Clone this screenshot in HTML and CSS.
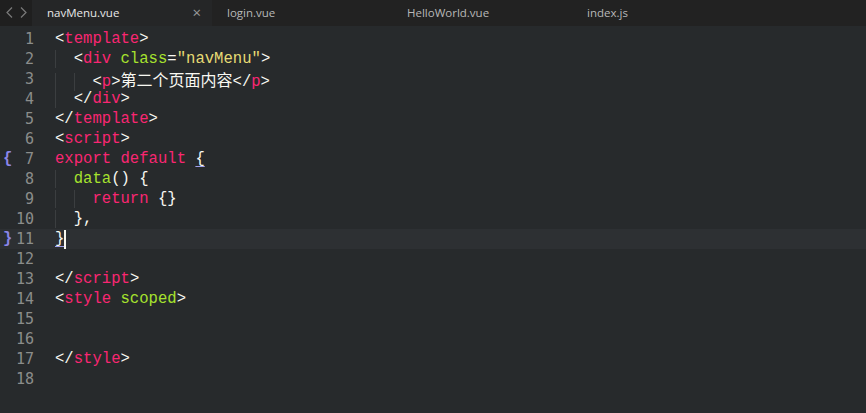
FILE: index.html
```html
<!DOCTYPE html>
<html>
<head>
<meta charset="utf-8">
<link rel="stylesheet" href="styles.css">
</head>
<body>
<div class="app">
  <div class="tabbar">
    <div class="nav">
      <svg width="7" height="11" viewBox="0 0 7 11"><path d="M6 0.5 L1 5.5 L6 10.5" fill="none" stroke="#7a7a7a" stroke-width="1.2"/></svg>
      <svg width="7" height="11" viewBox="0 0 7 11"><path d="M1 0.5 L6 5.5 L1 10.5" fill="none" stroke="#7a7a7a" stroke-width="1.2"/></svg>
    </div>
    <div class="tab active"><span class="name">navMenu.vue</span><span class="close">&times;</span></div>
    <div class="tab"><span class="name">login.vue</span></div>
    <div class="tab"><span class="name">HelloWorld.vue</span></div>
    <div class="tab"><span class="name">index.js</span></div>
  </div>
  <div class="editor">
    <div class="line"><span class="gut"><span class="num">1</span></span><span class="code"><span class="p">&lt;</span><span class="k">template</span><span class="p">&gt;</span></span></div>
    <div class="line"><span class="gut"><span class="num">2</span></span><span class="code"><span class="ig">  </span><span class="p">&lt;</span><span class="k">div</span> <span class="a">class</span><span class="p">=</span><span class="s">"navMenu"</span><span class="p">&gt;</span></span></div>
    <div class="line"><span class="gut"><span class="num">3</span></span><span class="code"><span class="ig">  </span><span class="ig">  </span><span class="p">&lt;</span><span class="k">p</span><span class="p">&gt;</span><span class="cjk">第二个页面内容</span><span class="p">&lt;/</span><span class="k">p</span><span class="p">&gt;</span></span></div>
    <div class="line"><span class="gut"><span class="num">4</span></span><span class="code"><span class="ig">  </span><span class="p">&lt;/</span><span class="k">div</span><span class="p">&gt;</span></span></div>
    <div class="line"><span class="gut"><span class="num">5</span></span><span class="code"><span class="p">&lt;/</span><span class="k">template</span><span class="p">&gt;</span></span></div>
    <div class="line"><span class="gut"><span class="num">6</span></span><span class="code"><span class="p">&lt;</span><span class="k">script</span><span class="p">&gt;</span></span></div>
    <div class="line"><span class="gut"><span class="br">{</span><span class="num">7</span></span><span class="code"><span class="k">export</span> <span class="k">default</span> <span class="p ul">{</span></span></div>
    <div class="line"><span class="gut"><span class="num">8</span></span><span class="code"><span class="ig">  </span><span class="a">data</span><span class="p">() {</span></span></div>
    <div class="line"><span class="gut"><span class="num">9</span></span><span class="code"><span class="ig">  </span><span class="ig">  </span><span class="k">return</span> <span class="p">{}</span></span></div>
    <div class="line"><span class="gut"><span class="num">10</span></span><span class="code"><span class="ig">  </span><span class="p">},</span></span></div>
    <div class="line cur"><span class="gut"><span class="br">}</span><span class="num">11</span></span><span class="code"><span class="p ul">}</span><span class="caret"></span></span></div>
    <div class="line"><span class="gut"><span class="num">12</span></span><span class="code"></span></div>
    <div class="line"><span class="gut"><span class="num">13</span></span><span class="code"><span class="p">&lt;/</span><span class="k">script</span><span class="p">&gt;</span></span></div>
    <div class="line"><span class="gut"><span class="num">14</span></span><span class="code"><span class="p">&lt;</span><span class="k">style</span> <span class="a">scoped</span><span class="p">&gt;</span></span></div>
    <div class="line"><span class="gut"><span class="num">15</span></span><span class="code"></span></div>
    <div class="line"><span class="gut"><span class="num">16</span></span><span class="code"></span></div>
    <div class="line"><span class="gut"><span class="num">17</span></span><span class="code"><span class="p">&lt;/</span><span class="k">style</span><span class="p">&gt;</span></span></div>
    <div class="line"><span class="gut"><span class="num">18</span></span><span class="code"></span></div>
  </div>
</div>
</body>
</html>
```

FILE: styles.css
```css
html, body {
  margin: 0;
  padding: 0;
  background: #272a2c;
}
.app {
  width: 866px;
  height: 413px;
  display: flex;
  flex-direction: column;
  background: #272a2c;
  overflow: hidden;
}
.tabbar {
  height: 26px;
  display: flex;
  background: #222222;
  font-family: "Open Sans", "Noto Sans", sans-serif;
  font-size: 11.5px;
  color: #b8b8b8;
  flex-shrink: 0;
}
.nav {
  width: 32px;
  display: flex;
  align-items: center;
  justify-content: center;
  gap: 7px;
  background: #1f1f1f;
  padding-bottom: 2px;
  box-sizing: border-box;
}
.nav svg { display: block; }
.tab {
  width: 180px;
  display: flex;
  align-items: center;
  padding-left: 15px;
  box-sizing: border-box;
  padding-bottom: 2px;
}
.tab.active {
  background: #252627;
  color: #e8e8e8;
}
.tab .name { flex: 1; }
.close {
  color: #9a9a9a;
  font-size: 15px;
  margin-right: 11px;
}
.editor {
  padding-top: 3px;
  font-family: "Liberation Mono", "DejaVu Sans Mono", "Noto Sans CJK SC", monospace;
  font-size: 15.6px;
  color: #f8f8f2;
}
.line {
  height: 20px;
  line-height: 20px;
  display: flex;
  white-space: pre;
}
.line.cur { background: #2d3033; }
.gut {
  width: 55px;
  flex-shrink: 0;
  display: flex;
  position: relative;
}
.num {
  width: 34px;
  text-align: right;
  color: #8b8d8b;
  font-family: "DejaVu Sans Mono", monospace;
  font-size: 15px;
}
.br {
  position: absolute;
  left: 3px;
  top: 0;
  color: #8b86e8;
  font-weight: bold;
}
.code {
  display: block;
  white-space: pre;
}
.p { color: #f8f8f2; }
.k { color: #f92672; }
.a { color: #a6e22e; }
.s { color: #e6db74; }
.cjk {
  font-family: "Noto Sans CJK SC", sans-serif;
  font-size: 16px;
  color: #f8f8f2;
}
.ig {
  box-shadow: inset 1px 0 0 #3b3e40;
}
.ul {
  text-decoration: underline;
  text-decoration-color: #9e9eea;
  text-underline-offset: 3px;
}
.caret {
  display: inline-block;
  width: 2px;
  height: 19px;
  background: #f8f8f0;
  vertical-align: top;
  margin-top: 1px;
}
```
